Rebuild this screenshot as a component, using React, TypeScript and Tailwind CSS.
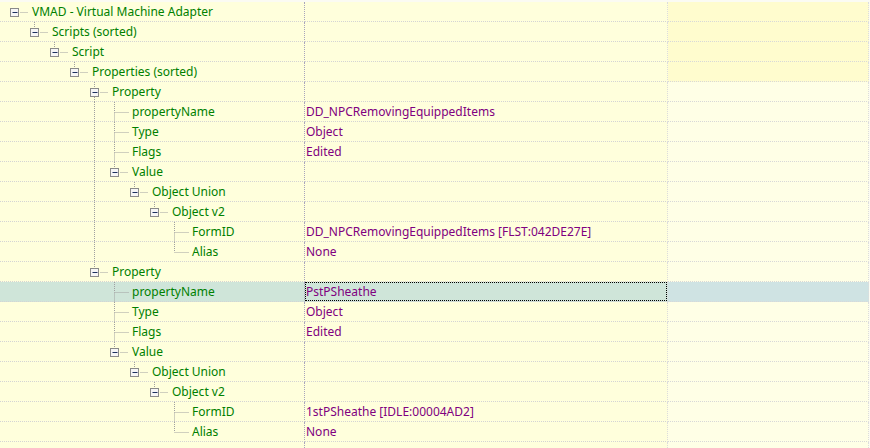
import React from "react";

type Row = {
  label: string;
  level: number;
  exp: boolean;
  next: boolean;
  guides: number[];
  value?: string;
  selected?: boolean;
  root?: boolean;
};

const propRows = (g: number[], name: string, formId: string, sel: boolean): Row[] => [
  { label: "propertyName", level: 5, exp: false, next: true, guides: g, value: name, selected: sel },
  { label: "Type", level: 5, exp: false, next: true, guides: g, value: "Object" },
  { label: "Flags", level: 5, exp: false, next: true, guides: g, value: "Edited" },
  { label: "Value", level: 5, exp: true, next: false, guides: g },
  { label: "Object Union", level: 6, exp: true, next: false, guides: g },
  { label: "Object v2", level: 7, exp: true, next: false, guides: g },
  { label: "FormID", level: 8, exp: false, next: true, guides: g, value: formId },
  { label: "Alias", level: 8, exp: false, next: false, guides: g, value: "None" },
];

const rows: Row[] = [
  { label: "VMAD - Virtual Machine Adapter", level: 0, exp: true, next: false, guides: [], root: true },
  { label: "Scripts (sorted)", level: 1, exp: true, next: false, guides: [] },
  { label: "Script", level: 2, exp: true, next: false, guides: [] },
  { label: "Properties (sorted)", level: 3, exp: true, next: false, guides: [] },
  { label: "Property", level: 4, exp: true, next: true, guides: [] },
  ...propRows([4], "DD_NPCRemovingEquippedItems", "DD_NPCRemovingEquippedItems [FLST:042DE27E]", false),
  { label: "Property", level: 4, exp: true, next: false, guides: [] },
  ...propRows([], "PstPSheathe", "1stPSheathe [IDLE:00004AD2]", true),
];

const LINE = "#a0a0a0";

function TreeGlyph({ r }: { r: Row }) {
  const w = 32 + 20 * r.level;
  const cx = 14.5 + 20 * r.level;
  const cy = 10.5;
  return (
    <svg width={w} height={20} className="shrink-0" style={{ overflow: "visible" }}>
      {r.guides.map((k) => (
        <line key={k} x1={14.5 + 20 * k} y1={0} x2={14.5 + 20 * k} y2={20} stroke={LINE} strokeDasharray="1 1" />
      ))}
      {!r.root && <line x1={cx} y1={0} x2={cx} y2={r.exp ? 6 : cy} stroke={LINE} strokeDasharray="1 1" />}
      {r.next && <line x1={cx} y1={r.exp ? 15 : cy} x2={cx} y2={20} stroke={LINE} strokeDasharray="1 1" />}
      {r.exp ? (
        <>
          <line x1={cx + 6} y1={cy} x2={cx + 14} y2={cy} stroke={LINE} strokeDasharray="1 1" />
          <rect x={cx - 4} y={cy - 4} width={8} height={8} fill="#f6f6f6" stroke="#8a8a8a" />
          <line x1={cx - 2} y1={cy} x2={cx + 3} y2={cy} stroke="#1c2f5e" />
        </>
      ) : (
        <line x1={cx + 1} y1={cy} x2={cx + 14} y2={cy} stroke={LINE} strokeDasharray="1 1" />
      )}
    </svg>
  );
}

export default function App() {
  return (
    <div
      className="w-[870px] h-[448px] overflow-hidden bg-[#fbfbf3] pt-[2px] text-[12px] leading-[19px]"
      style={{ fontFamily: '"Noto Sans", "Open Sans", sans-serif' }}
    >
      {rows.map((r, i) => {
        const sel = !!r.selected;
        const c3 = sel ? "bg-[#cfe3e3]" : i < 4 ? "bg-[#fffcce]" : "bg-[#ffffe6]";
        return (
          <div key={i} className="flex h-[20px]">
            <div
              className={`flex items-start w-[305px] shrink-0 border-r border-b border-dotted border-r-[#a8a4bc] border-b-[#d4d4d4] ${
                sel ? "bg-[#cfe5d9]" : "bg-[#ffffdc]"
              }`}
            >
              <TreeGlyph r={r} />
              <span className="text-[#008000] whitespace-nowrap">{r.label}</span>
            </div>
            <div
              className={`w-[363px] shrink-0 border-b border-r border-dotted border-b-[#d4d4d4] border-r-[#dcdcdc] ${
                sel ? "bg-[#cfe5d9]" : "bg-[#ffffdc]"
              }`}
            >
              <div
                className={`h-[19px] pl-[1px] whitespace-nowrap text-[#800080] ${
                  sel ? "outline outline-1 outline-dotted outline-black -outline-offset-1" : ""
                }`}
              >
                {r.value ?? ""}
              </div>
            </div>
            <div className={`w-[201px] shrink-0 border-b border-r border-dotted border-b-[#d8d8d8] border-r-[#dcdcdc] ${c3}`} />
          </div>
        );
      })}
      <div className="flex h-[20px]">
        <div className="w-[305px] shrink-0 border-r border-dotted border-r-[#a8a4bc] bg-[#ffffdc]" />
        <div className="w-[363px] shrink-0 border-r border-dotted border-r-[#dcdcdc] bg-[#ffffdc]" />
        <div className="w-[201px] shrink-0 border-r border-dotted border-r-[#dcdcdc] bg-[#ffffe6]" />
      </div>
    </div>
  );
}
